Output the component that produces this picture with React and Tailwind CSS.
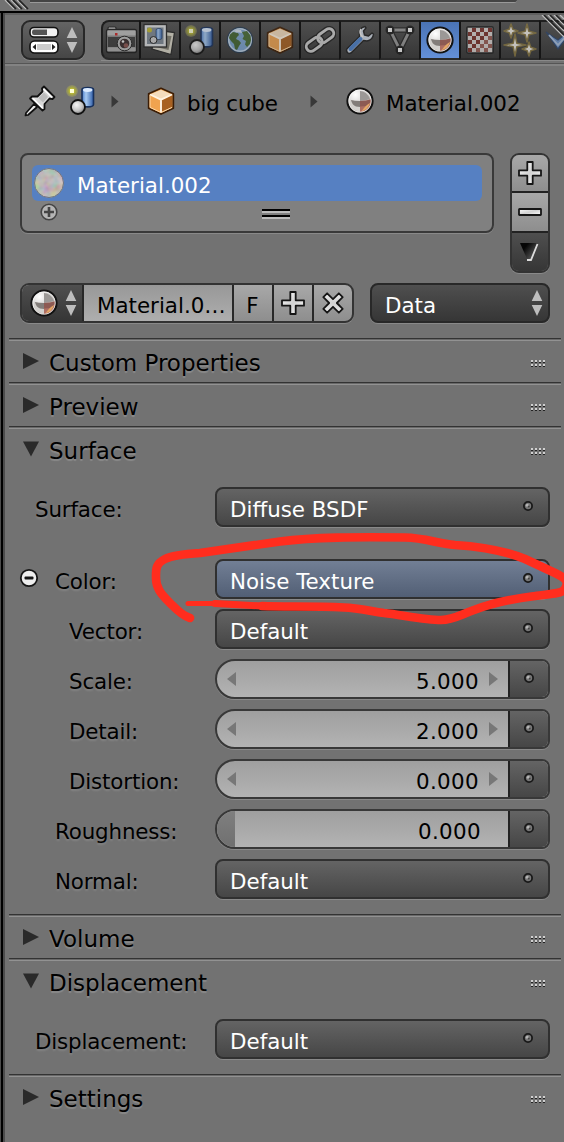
import React from "react";

const DARK = "bg-linear-to-b from-[#4f4f4f] to-[#363636]";
const MENU = "bg-linear-to-b from-[#646464] to-[#464646]";
const LIGHT = "bg-linear-to-b from-[#a8a8a8] to-[#8e8e8e]";

function Defs() {
  return (
    <svg className="absolute size-0" aria-hidden="true">
      <defs>
        <radialGradient id="ball" cx="0.32" cy="0.25" r="0.85">
          <stop offset="0" stopColor="#ffffff" />
          <stop offset="0.5" stopColor="#d2d0ce" />
          <stop offset="1" stopColor="#b0a8a0" />
        </radialGradient>
        <radialGradient id="grayBall" cx="0.4" cy="0.35" r="0.7">
          <stop offset="0" stopColor="#f6f6f6" />
          <stop offset="0.6" stopColor="#c2c2c2" />
          <stop offset="1" stopColor="#777" />
        </radialGradient>
        <linearGradient id="cyl" x1="0" x2="1">
          <stop offset="0" stopColor="#4a7cc8" />
          <stop offset="0.35" stopColor="#a9cbf2" />
          <stop offset="1" stopColor="#2f5da6" />
        </linearGradient>
        <linearGradient id="metal" x1="0" y1="0" x2="1" y2="1">
          <stop offset="0" stopColor="#ffffff" />
          <stop offset="0.5" stopColor="#d2d2d2" />
          <stop offset="1" stopColor="#ffffff" />
        </linearGradient>
        <linearGradient id="dropTri" x1="0" y1="0" x2="1" y2="0.8">
          <stop offset="0.3" stopColor="#050505" />
          <stop offset="1" stopColor="#666" />
        </linearGradient>
        <radialGradient id="glow">
          <stop offset="0.3" stopColor="#cccc28" />
          <stop offset="0.6" stopColor="#b0b03a" stopOpacity="0.8" />
          <stop offset="1" stopColor="#a6a660" stopOpacity="0.4" />
        </radialGradient>
        <filter id="mottle" x="0" y="0" width="1" height="1">
          <feTurbulence type="fractalNoise" baseFrequency="0.12" numOctaves="2" seed="4" />
          <feColorMatrix values="1 0 0 0 0.04  0 1 0 0 0.06  0 0 1 0 0.04  0 0 0 0 1" />
          <feComposite in2="SourceGraphic" operator="in" />
        </filter>
      </defs>
    </svg>
  );
}

function MaterialIcon() {
  return (
    <svg width="28" height="28" viewBox="0 0 28 28">
      <circle cx="14" cy="14" r="12.6" fill="url(#ball)" stroke="#111" strokeWidth="2" />
      <path d="M14 14V4Q20.500 4 24 12Q19 13.800 14 14Z" fill="#9b9896" />
      <path d="M14 14Q8 14 3.500 12.400Q4 20 8.500 22.800Q12 24.800 14 24.600Z" fill="#d3d1ce" />
      <path d="M14 14Q8 14 5 13Q6 18 10 19.500L14 20Z" fill="#827d7a" />
      <path d="M14 14Q20 14 25 12.200Q26 23 14 25.300Z" fill="#ae6f63" />
      <path d="M14 14Q20 14 24.500 12.500Q24.500 17 21 19L14 19.500Z" fill="#774c49" opacity="0.6" />
      <path d="M15.500 24.200Q22 23 24 16Q20 18 15.500 24.200Z" fill="#e3a765" />
      <circle cx="14" cy="14" r="11.2" fill="none" stroke="#fff" strokeOpacity="0.55" strokeWidth="1" />
    </svg>
  );
}

function SceneIcon() {
  return (
    <svg width="30" height="30" viewBox="0 0 30 30">
      <path d="M16 4.5C16 1.8 27.500 1.8 27.500 4.5V19.5C27.500 22.6 16 22.6 16 19.5Z" fill="url(#cyl)" stroke="#17305c" strokeWidth="1.6" />
      <ellipse cx="21.700" cy="5" rx="4.700" ry="1.9" fill="#dcebff" />
      <circle cx="6" cy="6" r="6" fill="url(#glow)" />
      <rect x="4" y="4" width="4" height="4" fill="#ffffd8" />
      <circle cx="12" cy="22" r="7" fill="url(#grayBall)" stroke="#111" strokeWidth="1.8" />
    </svg>
  );
}

function CubeIcon() {
  return (
    <svg width="28" height="28" viewBox="0 0 28 28">
      <path d="M14 1.3L26.3 6.8V21.2L14 27L1.7 21.2V6.8Z" fill="#eda04d" stroke="#3c1d05" strokeWidth="1.8" strokeLinejoin="round" />
      <path d="M14 2.8L24.5 7.3L14 12.5L3.5 7.3Z" fill="#f4dcbd" />
      <path d="M3 8L14 13V25L3 20.3Z" fill="#f0a34f" />
      <path d="M25 8L14 13V25L25 20.3Z" fill="#a86020" />
      <path d="M3 7.5L14 12.7L25 7.5M14 12.7V25.5" fill="none" stroke="#fff3e2" strokeWidth="1.9" />
      <path d="M3 8V20.4L14 25.5L25 20.4" fill="none" stroke="#fbd7a7" strokeWidth="1" />
    </svg>
  );
}

function PinIcon() {
  return (
    <svg width="32" height="32" viewBox="0 0 32 32" strokeLinejoin="round">
      <path d="M10 19L13 22L4 30L1.5 30.5L2 28Z" fill="#eee" stroke="#111" strokeWidth="1.7" />
      <path d="M20 1.5L30.5 12L28.5 14L25.5 13.5L20.5 19L20.5 24L18.5 25.5L6 13.5L8 11.5L13.5 11.5L18.5 6.5L18 3.5Z" fill="url(#metal)" stroke="#111" strokeWidth="1.8" />
      <path d="M20 7.5L14.5 13L19 17.5L24 12Z" fill="#bbb" />
      <path d="M19.5 4L28 12.5M9 13.5L18.5 23" stroke="#fff" strokeWidth="1.5" fill="none" />
    </svg>
  );
}

function CameraIcon() {
  return (
    <svg width="40" height="40" viewBox="0 0 40 40">
      <rect x="7" y="7" width="8" height="6" rx="1" fill="#ccc" stroke="#222" strokeWidth="1.2" />
      <rect x="5.5" y="9.500" width="30" height="23" rx="2" fill="#8d8d8d" stroke="#1c1c1c" strokeWidth="1.3" />
      <rect x="6.500" y="10.500" width="28" height="5" fill="#bdbdbd" />
      <rect x="7" y="17" width="27" height="10" fill="#3d3d3d" />
      <rect x="6.500" y="27.500" width="28" height="3.500" fill="#adadad" />
      <rect x="14" y="13" width="2.500" height="2.500" fill="#c22" />
      <circle cx="23.500" cy="23.500" r="7.300" fill="#bdbdbd" stroke="#222" strokeWidth="1" />
      <circle cx="23.500" cy="23.500" r="4.800" fill="#3a2b2c" />
      <circle cx="25" cy="25.500" r="2.300" fill="#8c5551" />
      <circle cx="22" cy="21.500" r="1.300" fill="#eee" />
    </svg>
  );
}

function LayersIcon() {
  return (
    <svg width="40" height="40" viewBox="0 0 40 40">
      <path d="M16 10L34.500 12.500L31 34.500L12 29Z" fill="#d9d6c8" stroke="#262626" strokeWidth="1.3" />
      <path d="M18 15L31.500 16L28.500 30L16 27Z" fill="#827f72" />
      <rect x="4" y="4.500" width="22.500" height="22.500" fill="#dcdee0" stroke="#262626" strokeWidth="1.300" />
      <rect x="7" y="7.500" width="16.500" height="16.500" fill="#7d8894" />
      <circle cx="9.500" cy="10" r="2.500" fill="#c1b82f" />
      <rect x="16" y="8.500" width="6" height="11" rx="2" fill="url(#cyl)" stroke="#29446c" strokeWidth="0.8" />
      <circle cx="13.500" cy="20" r="3.500" fill="#ccc" stroke="#222" />
    </svg>
  );
}

function WorldIcon() {
  return (
    <svg width="28" height="28" viewBox="0 0 28 28">
      <circle cx="14" cy="14" r="12.500" fill="#7ba3cf" stroke="#263a50" strokeWidth="1.500" />
      <circle cx="14" cy="14" r="11.300" fill="none" stroke="#bdd0e4" strokeWidth="1.500" />
      <path d="M4 8.500L7 6L12 7L13 9L11 11L10 13L13 14.500L15 17L13 20L11 24L9 23L8 18L5 15L3 12Z" fill="#41642f" />
      <path d="M16 6L21 5L24.500 9.500L25 14L24 18L21 21L19 18.500L20 15L16.500 13L18 10Z" fill="#466b33" />
      <path d="M8 5Q11 3 15 4L16 7L13 6.500L10 6.500Z" fill="#dfe8ef" opacity="0.85" />
    </svg>
  );
}

function LinkIcon() {
  return (
    <svg width="32" height="28" viewBox="0 0 32 28" fill="none">
      <g stroke="#1d1d1d" strokeWidth="5.400">
        <rect x="1.500" y="13.500" width="17.500" height="9.500" rx="4.750" transform="rotate(-36 10.250 18.250)" />
        <rect x="13" y="5" width="17.500" height="9.500" rx="4.750" transform="rotate(-36 21.750 9.750)" />
      </g>
      <g stroke="#cdcdcd" strokeWidth="2.900">
        <rect x="1.500" y="13.500" width="17.500" height="9.500" rx="4.750" transform="rotate(-36 10.250 18.250)" />
        <rect x="13" y="5" width="17.500" height="9.500" rx="4.750" transform="rotate(-36 21.750 9.750)" />
      </g>
    </svg>
  );
}

function WrenchIcon() {
  return (
    <svg width="30" height="30" viewBox="0 0 30 30" strokeLinejoin="round">
      <path d="M20 1.500L21 3L18.500 6L19.500 10L23.500 11L27 8L28.500 9Q28 15 22 16L18.500 15.500L6 28Q2.500 29.500 1.500 25.500L1.800 24L14.500 11.500Q13 3 20 1.500Z" fill="#ced6e2" stroke="#202020" strokeWidth="1.500" />
      <path d="M15.500 14L5.500 24" stroke="#4c80c8" strokeWidth="4" strokeLinecap="round" />
      <path d="M16 4Q14 7 16 10L18 12" fill="none" stroke="#f1f1f1" strokeWidth="1.500" />
    </svg>
  );
}

function MeshIcon() {
  return (
    <svg width="30" height="30" viewBox="0 0 30 30">
      <path d="M5 5H25L15 25Z" fill="none" stroke="#242424" strokeWidth="5.500" />
      <path d="M5 5H25L15 25Z" fill="none" stroke="#969696" strokeWidth="2.800" />
      {[[5, 5], [25, 5], [15, 25]].map(([x, y]) => (
        <g key={x}>
          <circle cx={x} cy={y} r="4.500" fill="#1c1c1c" />
          <rect x={x - 2} y={y - 2} width="4" height="4" fill="#f2f2f2" />
        </g>
      ))}
    </svg>
  );
}

function TextureIcon() {
  const cells = [];
  for (let r = 0; r < 6; r++)
    for (let c = 0; c < 6; c++)
      cells.push(<rect key={r * 6 + c} x={2 + c * 4} y={2 + r * 4} width="4" height="4" fill={(r + c) % 2 ? (r + c > 6 ? "#985d54" : "#7a2f29") : "#d8d2d0"} />);
  return (
    <svg width="28" height="28" viewBox="0 0 28 28">
      <rect x="0.700" y="0.700" width="26.600" height="26.600" rx="1.500" fill="#777" stroke="#222" strokeWidth="1.400" />
      {cells}
    </svg>
  );
}

const star = (x, y, r) =>
  `M${x} ${y - r}L${x + 1.8} ${y - 1.8}L${x + r} ${y}L${x + 1.8} ${y + 1.8}L${x} ${y + r}L${x - 1.8} ${y + 1.8}L${x - r} ${y}L${x - 1.8} ${y - 1.8}Z`;

function ParticlesIcon() {
  return (
    <svg width="34" height="34" viewBox="0 0 34 34">
      <path d={star(8, 8, 7) + star(24, 10, 9) + star(12, 22, 11) + star(26, 26, 7)} fill="#efece6" stroke="#85743f" strokeWidth="1.500" strokeLinejoin="round" />
    </svg>
  );
}

function PhysicsIcon() {
  return (
    <svg width="40" height="40" viewBox="0 0 40 40" className="shrink-0">
      <path d="M6 12L18 29L34 8L25 14L18 20Z" fill="#6c94cc" stroke="#2d4468" strokeWidth="1.300" />
      <path d="M9 15L18 25L28 14" fill="none" stroke="#abc0dd" strokeWidth="1.800" />
    </svg>
  );
}

function EditorIcon() {
  return (
    <svg width="30" height="28" viewBox="0 0 30 28">
      <rect x="1" y="1.500" width="28" height="9.500" rx="4" fill="#f2f2f2" stroke="#111" strokeWidth="1.600" />
      <path d="M5 3.500H18V9H5Q3 9 3 6.500Q3 3.500 5 3.500Z" fill="#555" />
      <rect x="1" y="15" width="28" height="12" rx="4.500" fill="#fff" stroke="#111" strokeWidth="1.600" />
      <rect x="8" y="18" width="14" height="6" fill="#ccc" />
      <path d="M7 18V24L3.500 21ZM23 18V24L26.500 21Z" fill="#222" />
    </svg>
  );
}

function UpDown() {
  return (
    <svg width="12" height="28" viewBox="0 0 12 28" fill="#bdbdbd" className="shrink-0">
      <path d="M6 1L11.300 12H0.700ZM0.700 16H11.300L6 27Z" />
    </svg>
  );
}

function Plus({ turned }) {
  return (
    <svg width="26" height="26" viewBox="0 0 26 26" className={turned ? "rotate-45" : ""}>
      <path d="M10.300 2H15.700V10.300H24V15.700H15.700V24H10.300V15.700H2V10.300H10.300Z" fill="url(#metal)" stroke="#161616" strokeWidth="1.800" strokeLinejoin="round" />
    </svg>
  );
}

function Socket() {
  return (
    <svg width="12" height="12" viewBox="0 0 12 12" className="shrink-0">
      <circle cx="6" cy="6" r="4.100" fill="#777" stroke="#191919" strokeWidth="1.800" />
      <circle cx="5.300" cy="5.300" r="1.500" fill="#b5b5b5" />
      <circle cx="6.700" cy="6.500" r="1" fill="#444" />
    </svg>
  );
}

function Crumb() {
  return (
    <svg width="8" height="13" viewBox="0 0 8 13"><path d="M0.500 0.500L7.500 6.500L0.500 12.500Z" fill="#383838" /></svg>
  );
}

function Tab({ children, active, first }) {
  return (
    <div className={`flex h-10 shrink-0 items-center justify-center overflow-hidden border-y-2 border-[#1f1f1f] border-b-[#2a2a2a] ${first ? "w-[38px] rounded-l-lg border-l-2" : "w-10 border-l-2 border-l-[#151515]"} ${active ? "bg-linear-to-b from-[#4a73b4] to-[#6490d8]" : DARK}`}>
      <div className={`-ml-px flex shrink-0 items-center justify-center ${active ? "" : "opacity-75"}`}>{children}</div>
    </div>
  );
}

function Grip() {
  return (
    <svg width="14" height="8" viewBox="0 0 14 8" className="ml-auto mr-[16px] mt-[21px]" shapeRendering="crispEdges">
      {[0, 4, 8, 12].map((x) => (
        <g key={x}>
          <rect x={x} y="0" width="2" height="2" fill="#d0d0d0" />
          <rect x={x} y="2" width="2" height="1" fill="#222" />
          <rect x={x} y="4" width="2" height="2" fill="#d0d0d0" />
          <rect x={x} y="6" width="2" height="1" fill="#222" />
        </g>
      ))}
    </svg>
  );
}

function Panel({ title, open, children }) {
  return (
    <section className="ml-1 mr-[3px]">
      <header className="flex h-11 items-start border-t border-[#333] shadow-[inset_0_1px_0_#686868,inset_0_2px_0_#929292]">
        <svg width="16" height="16" viewBox="0 0 16 16" className="ml-[14px] mt-[14px]" fill="#2a2a2a">
          <path d={open ? "M0 0.500H16L8 15.500Z" : "M0 0V16L16 8Z"} />
        </svg>
        <h2 className="ml-[10px] mt-[7px] text-[23px] leading-[34px] [text-shadow:0_2px_1px_#8a8a8a]">{title}</h2>
        <Grip />
      </header>
      {children}
    </section>
  );
}

function Row({ label, indent, minus, children }) {
  return (
    <div className="mr-[11px] flex h-10 items-center">
      <div className="flex w-[206px] shrink-0 items-center">
        {minus && (
          <svg width="20" height="20" viewBox="0 0 20 20" className="-mt-[2px] ml-[10px] mr-4">
            <circle cx="10" cy="10" r="8.200" fill="#eee" stroke="#151515" strokeWidth="1.800" />
            <rect x="5.500" y="8.500" width="9" height="3" rx="1" fill="#151515" />
          </svg>
        )}
        <span className={`${indent} whitespace-nowrap pt-[5px] leading-[35px] tracking-[-0.15px] [text-shadow:0_2px_2px_#858585]`}>{label}</span>
      </div>
      {children}
    </div>
  );
}

function Menu({ children, linked }) {
  return (
    <div className={`flex h-10 flex-1 items-center justify-between rounded-lg border-2 border-[#303030] pl-[13px] pr-[14px] text-white shadow-[0_1px_0_#898989] ${linked ? "bg-linear-to-b from-[#727f95] to-[#525f75]" : MENU}`}>
      <span className="pt-[6px] leading-[30px]">{children}</span>
      <div className="-mt-[3px] flex"><Socket /></div>
    </div>
  );
}

function NumberField({ value, slider }) {
  return (
    <div className="flex h-10 flex-1 overflow-hidden rounded-l-[20px] rounded-r-lg border-2 border-[#383838] bg-linear-to-b from-[#9f9f9f] to-[#b3b3b3] shadow-[0_1px_0_#898989]">
      {slider ? (
        <div className="w-[18px] bg-linear-to-b from-[#7f7f7f] to-[#707070]" />
      ) : (
        <svg width="9" height="14" viewBox="0 0 9 14" className="ml-[10px] mt-[11px]"><path d="M9 0V14L0 7Z" fill="#777" /></svg>
      )}
      <span className={`ml-auto pt-[5px] leading-8 tracking-[0.35px] text-black ${slider ? "mr-[27px]" : "mr-[10px]"}`}>{value}</span>
      {!slider && <svg width="9" height="14" viewBox="0 0 9 14" className="mr-[10px] mt-[11px]"><path d="M0 0V14L9 7Z" fill="#777" /></svg>}
      <div className={`flex w-10 items-start justify-center border-l-2 border-[#222] pr-px pt-[11px] ${MENU}`}><Socket /></div>
    </div>
  );
}

export default function App() {
  return (
    <div className="relative flex h-[1142px] w-[564px] flex-col overflow-hidden bg-[#727272] font-['DejaVu_Sans',sans-serif] text-[21.4px] text-black">
      <Defs />
      <div className="h-[13px] shrink-0 border-b-2 border-black bg-[#727272]">
        <div className="flex h-[11px]">
          <svg width="30" height="11" viewBox="0 0 30 11" className="shrink-0" fill="none" strokeWidth="1.200">
            <path d="M5 0L14 9M11 0L20 9M17 0L26 9" stroke="#bbb" />
            <path d="M7 0L16 9M13 0L22 9M19 0L28 9" stroke="#222" strokeWidth="1.700" />
          </svg>
          <div className="h-[3px] w-[487px] rounded-br-lg border-b border-[#999] bg-[#444]" />
        </div>
      </div>
      <div className="flex min-h-0 flex-1 flex-col border-l-[5px] border-[#4c4c4c] shadow-[inset_0_2px_0_#5f5f5f]">
        <div className="flex h-[51px] shrink-0 items-start overflow-hidden border-b border-[#555] pt-[7px]">
          <div className={`ml-4 flex h-10 w-16 shrink-0 items-center justify-between rounded-[9px] border-2 border-[#282828] pl-[6px] pr-[5px] shadow-[0_1px_0_#898989] ${MENU}`}>
            <EditorIcon /><UpDown />
          </div>
          <div className="ml-4 flex shadow-[0_1px_0_#898989]">
            <Tab first><CameraIcon /></Tab>
            <Tab><LayersIcon /></Tab>
            <Tab><SceneIcon /></Tab>
            <Tab><WorldIcon /></Tab>
            <Tab><CubeIcon /></Tab>
            <Tab><LinkIcon /></Tab>
            <Tab><WrenchIcon /></Tab>
            <Tab><MeshIcon /></Tab>
            <Tab active><MaterialIcon /></Tab>
            <Tab><TextureIcon /></Tab>
            <Tab><ParticlesIcon /></Tab>
            <Tab><PhysicsIcon /></Tab>
          </div>
        </div>
        <div className="flex h-[89px] shrink-0 items-start border-t-2 border-[#838383] pt-[19px]">
          <div className="ml-[19px] flex"><PinIcon /></div>
          <div className="ml-[10px] flex"><SceneIcon /></div>
          <div className="ml-[15px] mt-[10px] flex"><Crumb /></div>
          <div className="ml-[28px] mt-[2px] flex"><CubeIcon /></div>
          <span className="ml-[12px] w-[92px] whitespace-nowrap pt-[3px] leading-8 tracking-[-0.15px]">big cube</span>
          <div className="ml-[31px] mt-[10px] flex"><Crumb /></div>
          <div className="ml-[28px] mt-[2px] flex"><MaterialIcon /></div>
          <span className="ml-[12px] pt-[3px] leading-8">Material.002</span>
        </div>
        <div className="ml-[15px] flex shrink-0 gap-4">
          <div className="h-20 w-[474px] rounded-lg border-2 border-[#393939] bg-[#808080] px-[10px] pt-[10px] shadow-[0_1px_0_#898989]">
            <div className="flex h-9 items-center rounded-md bg-[#5680c2] text-white">
              <svg width="30" height="30" viewBox="0 0 30 30" className="-mt-px ml-[2px]">
                <circle cx="15" cy="15" r="14.500" fill="#c3bdb8" filter="url(#mottle)" />
                <circle cx="15" cy="15" r="14.500" fill="#b9b1ab" fillOpacity="0.550" stroke="#6f7480" strokeWidth="1" />
              </svg>
              <span className="ml-[13px] pt-[6px] leading-[30px]">Material.002</span>
            </div>
            <div className="flex items-start">
              <svg width="18" height="18" viewBox="0 0 18 18" className="ml-2 mt-[2px]">
                <circle cx="9" cy="9" r="7.800" fill="#b5b5b5" stroke="#444" strokeWidth="1.600" />
                <path d="M9 4V14M4 9H14" stroke="#444" strokeWidth="2.600" />
              </svg>
              <div className="ml-[204px] mt-2 flex w-7 flex-col gap-[2px]">
                <div className="h-1 border-t-2 border-black bg-[#bbb]" />
                <div className="h-1 border-t-2 border-black bg-[#bbb]" />
              </div>
            </div>
          </div>
          <div className="flex h-[120px] w-10 flex-col overflow-hidden rounded-[9px] border-2 border-[#333] shadow-[0_1px_0_#898989]">
            <div className={`flex h-[38px] items-center justify-center border-b-2 border-[#222] ${LIGHT}`}><Plus /></div>
            <div className={`flex h-10 items-center justify-center border-b-2 border-[#222] ${LIGHT}`}>
              <svg width="26" height="10" viewBox="0 0 26 10"><rect x="2" y="2" width="22" height="6" rx="0.500" fill="url(#metal)" stroke="#161616" strokeWidth="1.800" /></svg>
            </div>
            <div className={`flex flex-1 items-center justify-center pr-[2px] ${DARK}`}>
              <svg width="20" height="20" viewBox="0 0 20 20"><path d="M1 1H18L11.500 18H8.500Z" fill="url(#dropTri)" /><path d="M18.500 2L12 18H8" fill="none" stroke="#ddd" strokeWidth="1.800" /></svg>
            </div>
          </div>
        </div>
        <div className="ml-[15px] mt-[10px] flex h-10 shrink-0 gap-4">
          <div className={`flex w-[334px] overflow-hidden rounded-[9px] border-2 border-[#333] shadow-[0_1px_0_#898989] ${LIGHT}`}>
            <div className={`flex w-[62px] items-center justify-between border-r-2 border-[#282828] pl-2 pr-[5px] ${DARK}`}><MaterialIcon /><UpDown /></div>
            <span className="w-[150px] whitespace-nowrap border-r-2 border-[#282828] bg-linear-to-b from-[#989898] to-[#aeaeae] pl-[13px] pt-[5px] leading-8">Material.0…</span>
            <span className="w-10 border-r-2 border-[#282828] pr-px pt-[5px] text-center leading-8">F</span>
            <div className="flex w-10 items-center justify-center border-r-2 border-[#282828]"><Plus /></div>
            <div className="flex flex-1 items-center justify-center"><Plus turned /></div>
          </div>
          <div className={`flex w-[180px] items-center justify-between rounded-lg border-2 border-[#282828] pl-[13px] pr-[5px] text-white shadow-[0_1px_0_#898989] ${DARK}`}>
            <span className="pt-[6px] leading-[30px]">Data</span><UpDown />
          </div>
        </div>
        <div className="mt-[15px] shrink-0">
          <Panel title="Custom Properties" />
          <Panel title="Preview" />
          <Panel title="Surface" open>
            <div className="mt-[17px] flex flex-col gap-[10px] pb-[15px]">
              <div className="mb-[22px]"><Row label="Surface:" indent="ml-[26px]"><Menu>Diffuse BSDF</Menu></Row></div>
              <Row label="Color:" minus indent="ml-0"><Menu linked>Noise Texture</Menu></Row>
              <Row label="Vector:" indent="ml-[60px]"><Menu>Default</Menu></Row>
              <Row label="Scale:" indent="ml-[60px]"><NumberField value="5.000" /></Row>
              <Row label="Detail:" indent="ml-[60px]"><NumberField value="2.000" /></Row>
              <Row label="Distortion:" indent="ml-[60px]"><NumberField value="0.000" /></Row>
              <Row label="Roughness:" indent="ml-[46px]"><NumberField value="0.000" slider /></Row>
              <Row label="Normal:" indent="ml-[46px]"><Menu>Default</Menu></Row>
            </div>
          </Panel>
          <Panel title="Volume" />
          <Panel title="Displacement" open>
            <div className="mt-[17px] pb-[15px]">
              <Row label="Displacement:" indent="ml-[26px]"><Menu>Default</Menu></Row>
            </div>
          </Panel>
          <Panel title="Settings" />
        </div>
      </div>
      <div className="absolute bottom-0 left-px top-[11px] w-[2px] bg-black" />
      <svg width="24" height="24" viewBox="0 0 24 24" className="absolute right-0 top-[15px]" fill="none">
        <path d="M2 0L24 22M8 0L24 16M14 0L24 10M20 0L24 4" stroke="#bbb" strokeWidth="1.300" />
        <path d="M4 0L24 20M10 0L24 14M16 0L24 8" stroke="#222" strokeWidth="1.500" />
      </svg>
      <svg width="564" height="110" viewBox="0 530 564 110" className="absolute left-0 top-[530px]" fill="none" stroke="#ff2d1e" strokeLinecap="round" strokeLinejoin="round">
        <path d="M190 618C182 616 175 608 169 602C161 594 156 588 156 578C156 570 155 564 165 559C173 555 185 554 200 553L280 541.500C315 537 355 537 405 537.500C425 538 436 543 455 545C485 547 508 552 525 559L555 573C566 578 570 582 564 590C560 594 548 594 535 596C510 599 490 604 474 610C460 615 453 620 441 620C425 620 402 615 384 613C365 610 356 608 344 607.500C310 606 285 607 262 606" strokeWidth="8.600" />
        <path d="M188 603.500L227 603.500L262 606" strokeWidth="5" />
        <path d="M215 603.500L262 606" strokeWidth="7" />
      </svg>
    </div>
  );
}
